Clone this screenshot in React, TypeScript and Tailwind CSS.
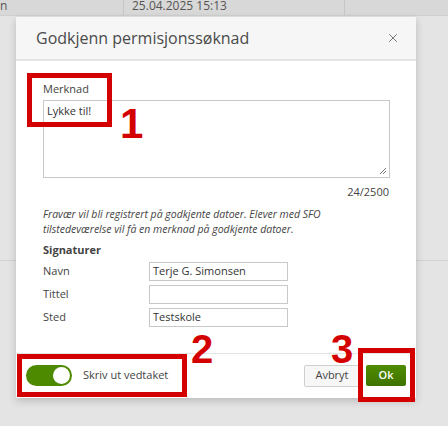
import { X } from "lucide-react";

function Toggle() {
  return (
    <div className="relative h-[21px] w-[46px] rounded-full bg-[#4d8a00]">
      <div className="absolute right-[2px] top-[2px] h-[17px] w-[17px] rounded-full bg-white" />
    </div>
  );
}

function SignRow({ label, value }: { label: string; value: string }) {
  return (
    <div className="flex items-center">
      <span className="w-[106px] text-[11px] text-[#444]">{label}</span>
      <div className="flex h-[19px] w-[139px] items-center border border-[#c8c8c8] bg-white px-[3px] text-[11px] text-[#333]">
        {value}
      </div>
    </div>
  );
}

export default function App() {
  return (
    <div
      className="relative h-[426px] w-[448px] overflow-hidden bg-[#e4e4e4]"
      style={{ fontFamily: '"Open Sans", "Liberation Sans", sans-serif' }}
    >
      {/* table row behind the overlay */}
      <div className="flex h-[16px] border-b border-[#cfcfcf] bg-[#d8d8d8] text-[12px] leading-[11px] text-[#555]">
        <div className="w-[124px] border-r border-[#c6c6c6]">n</div>
        <div className="w-[221px] border-r border-[#c6c6c6] pl-[8px]">25.04.2025 15:13</div>
        <div className="flex-1" />
      </div>
      <div className="absolute left-0 right-0 top-[260px] h-px bg-[#d2d2d2]" />

      {/* modal */}
      <div className="relative ml-[16px] mt-px w-[400px] bg-white shadow-[0_3px_8px_rgba(0,0,0,0.18)]">
        <div className="flex h-[44px] items-center justify-between border-b-2 border-[#e4e4e4] bg-[#f6f6f6] pl-[20px] pr-[16px]">
          <span className="text-[16px] text-[#4a4a4a]">Godkjenn permisjonssøknad</span>
          <X className="h-[14px] w-[14px] text-[#666]" strokeWidth={1.5} />
        </div>

        <div className="px-[27px] pb-[26px] pt-[20px]">
          <div className="text-[11px] leading-[15px] text-[#444]">Merknad</div>
          <div className="relative mt-[4px] h-[78px] w-[347px] border border-[#c8c8c8] px-[3px] pt-[2px] text-[11px] text-[#333]">
            Lykke til!
            <svg className="absolute bottom-[2px] right-[2px]" width="8" height="8" viewBox="0 0 8 8">
              <path d="M7 1L1 7M7 4L4 7" stroke="#777" strokeWidth="1" />
            </svg>
          </div>
          <div className="mt-[6px] text-right text-[11px] text-[#444]">24/2500</div>
          <p className="mt-[6px] text-[10.5px] italic leading-[15px] text-[#444]">
            Fravær vil bli registrert på godkjente datoer. Elever med SFO tilstedeværelse vil få en merknad på godkjente
            datoer.
          </p>
          <div className="mt-[5px] text-[11px] font-bold leading-[16px] text-[#444]">Signaturer</div>
          <div className="mt-[4px] flex flex-col gap-[4px]">
            <SignRow label="Navn" value="Terje G. Simonsen" />
            <SignRow label="Tittel" value="" />
            <SignRow label="Sted" value="Testskole" />
          </div>
        </div>

        <div className="flex h-[45px] items-center border-t border-[#e4e4e4] pl-[10px] pr-[10px]">
          <Toggle />
          <span className="ml-[11px] text-[11px] text-[#444]">Skriv ut vedtaket</span>
          <div className="ml-auto flex items-center gap-[6px]">
            <button className="h-[22px] w-[56px] rounded-[2px] border border-[#d0d0d0] bg-[#f7f7f7] text-[11px] text-[#444]">
              Avbryt
            </button>
            <button className="h-[21px] w-[40px] rounded-[2px] bg-gradient-to-b from-[#4f8c00] to-[#3f7300] text-[11px] font-semibold text-white">
              Ok
            </button>
          </div>
        </div>
      </div>

      {/* annotations */}
      <div className="absolute left-[27px] top-[73px] h-[54px] w-[85px] border-[5px] border-[#d40000]" />
      <div
        className="absolute left-[120px] top-[103px] text-[42px] font-bold leading-[42px] text-[#d40000]"
        style={{ fontFamily: '"Liberation Sans", Arial, sans-serif' }}
      >
        1
      </div>
      <div className="absolute left-[17px] top-[354px] h-[43px] w-[170px] border-[5px] border-[#d40000]" />
      <div
        className="absolute left-[191px] top-[329px] text-[40px] font-bold leading-[40px] text-[#d40000]"
        style={{ fontFamily: '"Liberation Sans", Arial, sans-serif' }}
      >
        2
      </div>
      <div className="absolute left-[358px] top-[348px] h-[54px] w-[57px] border-[5px] border-[#d40000]" />
      <div
        className="absolute left-[331px] top-[329px] text-[40px] font-bold leading-[40px] text-[#d40000]"
        style={{ fontFamily: '"Liberation Sans", Arial, sans-serif' }}
      >
        3
      </div>
    </div>
  );
}
